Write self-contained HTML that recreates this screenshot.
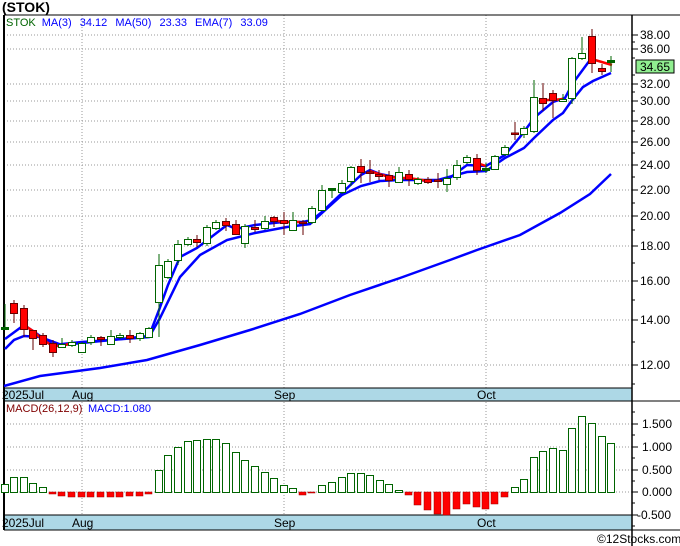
<!DOCTYPE html>
<html><head><meta charset="utf-8"><style>
html,body{margin:0;padding:0;background:#fff;}
svg{display:block;font-family:"Liberation Sans",sans-serif;}
</style></head><body>
<svg width="680" height="546" viewBox="0 0 680 546" xmlns="http://www.w3.org/2000/svg">
<rect width="680" height="546" fill="#fff"/>
<text x="2" y="12" font-size="14" font-weight="bold" fill="#000">(STOK)</text>
<rect x="4" y="388" width="628" height="13" fill="#add8e6"/>
<rect x="4" y="515" width="628" height="15" fill="#add8e6"/>
<g stroke="#999" stroke-width="1" stroke-dasharray="1,2" fill="none">
<path d="M4 35H632M4 49H632M4 84H632M4 101H632M4 121H632M4 142H632M4 165H632M4 190H632M4 216H632M4 246H632M4 281H632M4 320H632M4 365H632"/>
<path d="M82 15V388M284 15V388M486 15V388M82 402V515M284 402V515M486 402V515"/>
<path d="M4 424H632M4 447H632M4 470H632M4 492H632"/>
</g>
<g stroke="#000" fill="none">
<path d="M4 15H680" stroke-width="1"/>
<path d="M4 388H632M4 401H680M4 515H632M4 530H680" stroke-width="1"/>
<path d="M4 15V530" stroke-width="2"/>
<path d="M632 15V546" stroke-width="1.5"/>
</g>
<g stroke="#000" stroke-width="1">
<path d="M632 35H638M632 49H638M632 84H638M632 101H638M632 121H638M632 142H638M632 165H638M632 190H638M632 216H638M632 246H638M632 281H638M632 320H638M632 365H638M632 42H635M632 58H635M632 75H635M632 92H635M632 111H635M632 131H635M632 153H635M632 177H635M632 203H635M632 230H635M632 263H635M632 300H635M632 342H635M632 384H635"/>
<path d="M632 424H638M632 447H638M632 470H638M632 492H638M632 515H638M632 412H635M632 435H635M632 458H635M632 481H635M632 503H635M632 526H635"/>
</g>
<g font-size="12" fill="#000">
<text x="640" y="39">38.00</text><text x="640" y="53">36.00</text>
<text x="640" y="88">32.00</text><text x="640" y="105">30.00</text>
<text x="640" y="125">28.00</text><text x="640" y="146">26.00</text>
<text x="640" y="169">24.00</text><text x="640" y="194">22.00</text>
<text x="640" y="220">20.00</text><text x="640" y="250">18.00</text>
<text x="640" y="285">16.00</text><text x="640" y="324">14.00</text>
<text x="640" y="369">12.00</text>
<text x="642" y="428">1.500</text><text x="642" y="451">1.000</text>
<text x="642" y="474">0.500</text><text x="642" y="496">0.000</text>
<text x="637" y="519">-0.500</text>
</g>
<rect x="636" y="60" width="38" height="13" fill="#90ee90" stroke="#000" stroke-width="1"/>
<text x="640" y="71" font-size="12" fill="#000">34.65</text>
<text x="6" y="26" font-size="11" word-spacing="5"><tspan fill="#006400">STOK</tspan><tspan fill="#00f" dx="6">MA(3) 34.12 MA(50) 23.33 EMA(7) 33.09</tspan></text>
<text x="6" y="412" font-size="11"><tspan fill="#800000">MACD(26,12,9)</tspan><tspan fill="#00f" x="88">MACD:1.080</tspan></text>
<g font-size="12" fill="#000">
<text x="2" y="399">2025Jul</text><text x="72" y="399">Aug</text><text x="274" y="399">Sep</text><text x="477" y="399">Oct</text>
<text x="2" y="527">2025Jul</text><text x="72" y="527">Aug</text><text x="274" y="527">Sep</text><text x="477" y="527">Oct</text>
</g>
<text x="597" y="543" font-size="12" fill="#000">©12Stocks.com</text>
<polyline fill="none" stroke="#0000ff" stroke-width="2.5" points="4,386 40,376 100,368 147,360 200,345 250,330 300,314 350,295 400,278 450,260 477,250 520,235 560,213 590,194 611,174"/>
<polyline fill="none" stroke="#0000ff" stroke-width="2.5" points="5,349 14,340 24,336 40,337 62,345 82,343 111,340 149,337 160,318 180,277 200,255 227,240 255,233 287,227 310,224 322,213 342,195 361,186 380,181 399,180 438,180 467,172 486,171 505,158 524,148 534,138 553,120 563,113 570,103 583,87 593,81 611,73"/>
<polyline fill="none" stroke="#0000ff" stroke-width="2.5" points="5,339 24,325 33,331 43,338 53,345 72,343 82,342 111,340 149,336 159,310 168,285 180,257 197,248 227,225 236,229 255,225 283,222 303,222 312,220 322,212 342,193 361,175 370,170 380,174 399,178 428,181 447,180 467,165 486,166 505,155 520,137 535,117 553,102 565,98 573,83 590,60 595,59"/>
<g fill="none" stroke="#ff0000" stroke-width="2.5">
<polyline points="24,325 33,331 43,340 53,346 62,346 72,343"/>
<polyline points="272,220 284,222 300,222"/>
<polyline points="370,171 379,174 389,177 399,178 409,178 428,181"/>
<polyline points="477,163 486,166"/>
<polyline points="543,100 553,100 563,99"/>
<polyline points="595,60 612,65"/>
</g>
<g stroke-width="1">
<g stroke="#006400" fill="#fff">
<path d="M5 304V330M62 338V348M72 340V347M82 342V352M91 335V345M111 330V345M120 333V339M140 332V341M149 327V337M159 254V337M168 259V279M178 240V265M188 237V246M207 225V246M216 220V230M245 224V248M265 216V230M293 212V231M312 206V224M322 185V211M332 188V198M342 180V194M351 166V186M399 167V183M418 177V185M447 169V192M457 160V180M467 155V164M486 163V173M495 155V170M505 145V156M524 126V138M534 80V133M563 94V101M572 57V104M582 37V60M611 56V72"/>
<rect x="1.5" y="327.5" width="7" height="2" fill="#006400"/>
<rect x="58.5" y="344.5" width="7" height="3"/><rect x="68.5" y="342.5" width="7" height="3"/>
<rect x="78.5" y="343.5" width="7" height="9"/><rect x="87.5" y="337.5" width="7" height="5"/>
<rect x="107.5" y="336.5" width="7" height="8"/><rect x="116.5" y="335.5" width="7" height="2"/>
<rect x="136.5" y="333.5" width="7" height="5"/><rect x="145.5" y="328.5" width="7" height="9"/>
<rect x="155.5" y="265.5" width="7" height="37"/><rect x="164.5" y="261.5" width="7" height="16"/>
<rect x="174.5" y="244.5" width="7" height="16"/><rect x="184.5" y="239.5" width="7" height="5"/>
<rect x="203.5" y="227.5" width="7" height="16"/><rect x="212.5" y="222.5" width="7" height="6"/>
<rect x="241.5" y="226.5" width="7" height="17"/><rect x="261.5" y="221.5" width="7" height="7"/>
<rect x="289.5" y="220.5" width="7" height="10"/><rect x="308.5" y="208.5" width="7" height="14"/>
<rect x="318.5" y="190.5" width="7" height="20"/><rect x="328.5" y="188.5" width="7" height="2" fill="#006400"/>
<rect x="338.5" y="183.5" width="7" height="9"/><rect x="347.5" y="167.5" width="7" height="14"/>
<rect x="395.5" y="172.5" width="7" height="10"/><rect x="414.5" y="179.5" width="7" height="4"/>
<rect x="443.5" y="178.5" width="7" height="6"/><rect x="453.5" y="165.5" width="7" height="12"/>
<rect x="463.5" y="157.5" width="7" height="5"/><rect x="482.5" y="168.5" width="7" height="2" fill="#006400"/>
<rect x="491.5" y="156.5" width="7" height="13"/><rect x="501.5" y="147.5" width="7" height="7"/>
<rect x="520.5" y="128.5" width="7" height="6"/><rect x="530.5" y="97.5" width="7" height="34"/>
<rect x="559.5" y="99.5" width="7" height="2"/><rect x="568.5" y="58.5" width="7" height="40"/>
<rect x="578.5" y="53.5" width="7" height="5"/><rect x="607.5" y="60.5" width="7" height="2" fill="#006400"/>
</g>
<g stroke="#600" fill="#f00">
<path d="M14 300V323M24 305V337M33 330V350M43 333V347M53 340V357M101 336V346M130 330V343M197 235V247M226 218V231M236 220V235M255 220V232M274 216V227M284 212V235M303 220V235M361 159V183M370 160V182M379 170V180M389 171V187M409 170V186M428 177V184M438 173V188M477 154V175M515 122V140M543 83V111M553 90V118M592 29V73M602 64V75"/>
<rect x="10.5" y="303.5" width="7" height="10"/><rect x="20.5" y="308.5" width="7" height="21"/>
<rect x="29.5" y="330.5" width="7" height="8"/><rect x="39.5" y="335.5" width="7" height="9"/>
<rect x="49.5" y="343.5" width="7" height="9"/><rect x="97.5" y="337.5" width="7" height="2"/>
<rect x="126.5" y="335.5" width="7" height="3"/><rect x="193.5" y="239.5" width="7" height="3"/>
<rect x="222.5" y="221.5" width="7" height="4"/><rect x="232.5" y="224.5" width="7" height="10"/>
<rect x="251.5" y="227.5" width="7" height="2"/><rect x="270.5" y="217.5" width="7" height="4"/>
<rect x="280.5" y="220.5" width="7" height="3"/><rect x="299.5" y="222" width="7" height="1.5"/>
<rect x="357.5" y="166.5" width="7" height="6"/><rect x="366.5" y="172" width="7" height="1.5"/>
<rect x="375.5" y="174.5" width="7" height="2"/><rect x="385.5" y="175.5" width="7" height="5"/>
<rect x="405.5" y="174.5" width="7" height="5"/><rect x="424.5" y="179.5" width="7" height="3"/>
<rect x="434.5" y="180" width="7" height="1.5"/><rect x="473.5" y="158.5" width="7" height="12"/>
<rect x="511.5" y="133" width="7" height="1.5"/><rect x="539.5" y="98.5" width="7" height="5"/>
<rect x="549.5" y="93.5" width="7" height="7"/><rect x="588.5" y="36.5" width="7" height="27"/>
<rect x="598.5" y="68.5" width="7" height="3"/>
</g>
</g>
<g stroke="#006400" fill="#fff" stroke-width="1">
<rect x="1.5" y="484.5" width="7" height="8"/><rect x="10.5" y="477.5" width="7" height="15"/>
<rect x="20.5" y="477.5" width="7" height="15"/><rect x="29.5" y="483.5" width="7" height="9"/>
<rect x="39.5" y="487.5" width="7" height="5"/>
<rect x="155.5" y="470.5" width="7" height="22"/><rect x="164.5" y="455.5" width="7" height="37"/>
<rect x="174.5" y="447.5" width="7" height="45"/><rect x="184.5" y="441.5" width="7" height="51"/>
<rect x="193.5" y="440.5" width="7" height="52"/><rect x="203.5" y="439.5" width="7" height="53"/>
<rect x="212.5" y="439.5" width="7" height="53"/><rect x="222.5" y="443.5" width="7" height="49"/>
<rect x="232.5" y="452.5" width="7" height="40"/><rect x="241.5" y="460.5" width="7" height="32"/>
<rect x="251.5" y="466.5" width="7" height="26"/><rect x="261.5" y="472.5" width="7" height="20"/>
<rect x="270.5" y="478.5" width="7" height="14"/><rect x="280.5" y="485.5" width="7" height="7"/>
<rect x="289.5" y="488.5" width="7" height="4"/>
<rect x="318.5" y="485.5" width="7" height="7"/><rect x="328.5" y="482.5" width="7" height="10"/>
<rect x="338.5" y="477.5" width="7" height="15"/><rect x="347.5" y="473.5" width="7" height="19"/>
<rect x="357.5" y="473.5" width="7" height="19"/><rect x="366.5" y="475.5" width="7" height="17"/>
<rect x="376.5" y="480.5" width="7" height="12"/><rect x="385.5" y="484.5" width="7" height="8"/>
<rect x="395.5" y="490.5" width="7" height="2"/>
<rect x="511.5" y="487.5" width="7" height="5"/><rect x="520.5" y="479.5" width="7" height="13"/>
<rect x="530.5" y="457.5" width="7" height="35"/><rect x="539.5" y="451.5" width="7" height="41"/>
<rect x="549.5" y="448.5" width="7" height="44"/><rect x="559.5" y="450.5" width="7" height="42"/>
<rect x="568.5" y="428.5" width="7" height="64"/><rect x="578.5" y="416.5" width="7" height="76"/>
<rect x="588.5" y="423.5" width="7" height="69"/><rect x="598.5" y="436.5" width="7" height="56"/>
<rect x="607.5" y="443.5" width="7" height="49"/>
</g>
<g fill="#f00" stroke="#900" stroke-width="0.5">
<rect x="49" y="492" width="7" height="2"/><rect x="58" y="492" width="7" height="4"/>
<rect x="68" y="492" width="7" height="5"/><rect x="78" y="492" width="7" height="5"/>
<rect x="87" y="492" width="7" height="5"/><rect x="97" y="492" width="7" height="5"/>
<rect x="107" y="492" width="7" height="5"/><rect x="116" y="492" width="7" height="5"/>
<rect x="126" y="492" width="7" height="4"/><rect x="136" y="492" width="7" height="4"/>
<rect x="145" y="492" width="7" height="2"/>
<rect x="299" y="492" width="7" height="3"/><rect x="308" y="492" width="7" height="1"/>
<rect x="405" y="492" width="7" height="3"/><rect x="414" y="492" width="7" height="13"/>
<rect x="424" y="492" width="7" height="18"/><rect x="434" y="492" width="7" height="22"/>
<rect x="443" y="492" width="7" height="23"/><rect x="453" y="492" width="7" height="17"/>
<rect x="463" y="492" width="7" height="12"/><rect x="473" y="492" width="7" height="15"/>
<rect x="482" y="492" width="7" height="17"/><rect x="491" y="492" width="7" height="12"/>
<rect x="501" y="492" width="7" height="5"/>
</g>
</svg>
</body></html>
